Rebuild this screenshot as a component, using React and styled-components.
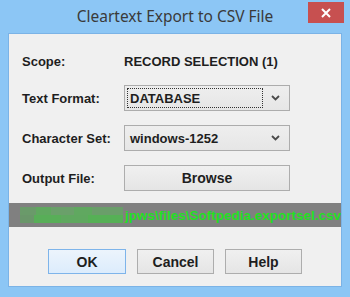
import React from "react";
import styled, { createGlobalStyle } from "styled-components";

const Global = createGlobalStyle`
  html, body {
    margin: 0;
    padding: 0;
    background: #8cc6f5;
  }
`;

const Frame = styled.div`
  width: 350px;
  height: 297px;
  box-sizing: border-box;
  display: flex;
  flex-direction: column;
  background: #8cc6f5;
  overflow: hidden;
`;

const TitleBar = styled.div`
  height: 33px;
  display: grid;
  grid-template-columns: 1fr auto 1fr;
  align-items: start;
`;

const Title = styled.div`
  grid-column: 2;
  padding-top: 5px;
  font-family: "Noto Sans", "Open Sans", sans-serif;
  font-size: 15.5px;
  color: #3a3a3a;
  white-space: nowrap;
`;

const CloseButton = styled.div`
  grid-column: 3;
  justify-self: end;
  margin: 2px 6px 0 0;
  width: 36px;
  height: 21px;
  background: #c75050;
  display: flex;
  align-items: center;
  justify-content: center;
`;

const Client = styled.div`
  margin: 0 8px 10px 8px;
  height: 254px;
  box-sizing: border-box;
  border: 1px solid #7bb3e6;
  background: #f0f0f0;
  display: flex;
  flex-direction: column;
  font-family: "Liberation Sans", Arial, sans-serif;
  font-weight: bold;
  font-size: 13px;
  color: #1e1e1e;
`;

const Form = styled.div`
  display: grid;
  grid-template-columns: 102px 166px;
  grid-template-rows: 20px 26px 26px 26px;
  row-gap: 14px;
  padding: 17px 0 0 13px;
  align-items: center;
`;

const Label = styled.div`
  white-space: nowrap;
`;

const Value = styled.div`
  white-space: nowrap;
`;

const Combo = styled.div`
  height: 26px;
  box-sizing: border-box;
  border: 1px solid #acacac;
  background: linear-gradient(#eeeeee, #e6e6e6);
  display: flex;
  align-items: center;
  padding: 2px;
`;

const ComboText = styled.div`
  flex: 1;
  height: 100%;
  box-sizing: border-box;
  display: flex;
  align-items: center;
  padding-left: 2px;
  border: 1px dotted ${(p) => (p.$focused ? "#333" : "transparent")};
  margin-right: 8px;
`;

const Chevron = styled.svg`
  width: 9px;
  height: 6px;
  margin: 0 7px 0 0;
`;

const Button = styled.div`
  height: ${(p) => p.$h || 25}px;
  width: ${(p) => p.$w || 77}px;
  box-sizing: border-box;
  border: 1px solid ${(p) => (p.$default ? "#7eb4ea" : "#adadad")};
  background: ${(p) => (p.$default ? "linear-gradient(#ecf4fc, #dcecfc)" : "linear-gradient(#f0f0f0, #e5e5e5)")};
  display: flex;
  align-items: center;
  justify-content: center;
  font-size: 14px;
`;

const PathBar = styled.div`
  margin-top: 12px;
  height: 24px;
  background: #808080;
  display: flex;
  align-items: center;
  justify-content: flex-end;
  overflow: hidden;
  white-space: nowrap;
  font-size: 13.5px;
  font-weight: bold;
  color: #22e022;
`;

const Pixelated = styled.div`
  width: 103px;
  height: 16px;
  margin-right: 2px;
  background:
    linear-gradient(90deg, #6a9a6a 0 16%, #5fa85f 16% 30%, #6aa06a 30% 52%, #60a860 52% 70%, #6a9e6a 70% 100%) top / 100% 50% no-repeat,
    linear-gradient(90deg, #6a966a 0 14%, #58ae58 14% 40%, #5fa85f 40% 66%, #56b056 66% 100%) bottom / 100% 50% no-repeat;
`;

const ButtonRow = styled.div`
  margin-top: 22px;
  display: flex;
  justify-content: center;
  gap: 11px;
`;

const Caret = () => (
  <Chevron viewBox="0 0 9 6">
    <path d="M1 1 L4.5 4.5 L8 1" fill="none" stroke="#4a4a4a" strokeWidth="1.8" />
  </Chevron>
);

export default function App() {
  return (
    <>
      <Global />
      <Frame>
        <TitleBar>
          <Title>Cleartext Export to CSV File</Title>
          <CloseButton>
            <svg width="10" height="10" viewBox="0 0 10 10">
              <path d="M1 1 L9 9 M9 1 L1 9" stroke="#fff" strokeWidth="2" />
            </svg>
          </CloseButton>
        </TitleBar>
        <Client>
          <Form>
            <Label>Scope:</Label>
            <Value>RECORD SELECTION (1)</Value>
            <Label>Text Format:</Label>
            <Combo>
              <ComboText $focused>DATABASE</ComboText>
              <Caret />
            </Combo>
            <Label>Character Set:</Label>
            <Combo>
              <ComboText>windows-1252</ComboText>
              <Caret />
            </Combo>
            <Label>Output File:</Label>
            <Button $w={166} $h={26}>Browse</Button>
          </Form>
          <PathBar>
            <Pixelated />
            jpws\files\Softpedia.exportsel.csv
          </PathBar>
          <ButtonRow>
            <Button $default $w={78}>OK</Button>
            <Button>Cancel</Button>
            <Button>Help</Button>
          </ButtonRow>
        </Client>
      </Frame>
    </>
  );
}
